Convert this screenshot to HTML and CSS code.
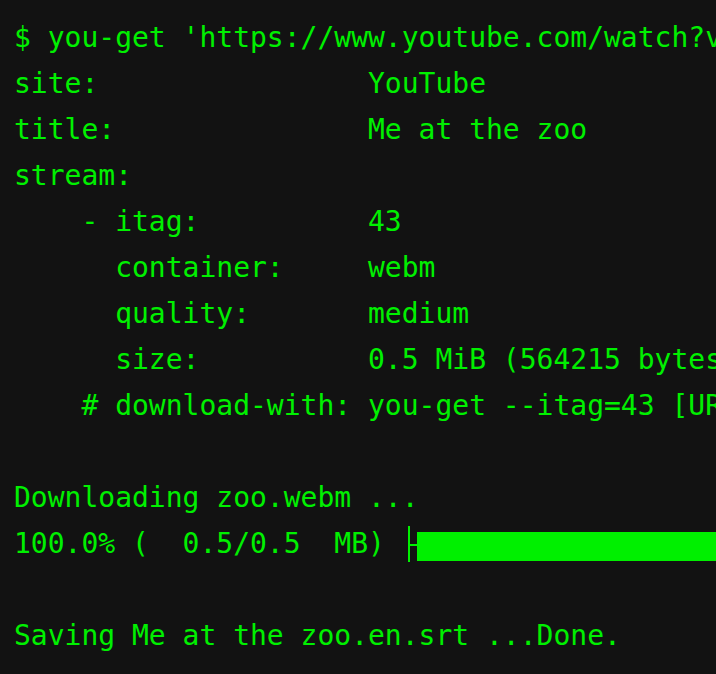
FILE: index.html
```html
<!DOCTYPE html>
<html lang="en">
<head>
    <meta charset="UTF-8">
    <title>you-get</title>
    <link rel="stylesheet" href="styles.css">
</head>
<body>
    <div class="terminal">
        <div class="line">$ you-get 'https://www.youtube.com/watch?v=jNQXAC9IVRw'</div>
        <div class="line">site:                YouTube</div>
        <div class="line">title:               Me at the zoo</div>
        <div class="line">stream:</div>
        <div class="line">    - itag:          43</div>
        <div class="line">      container:     webm</div>
        <div class="line">      quality:       medium</div>
        <div class="line">      size:          0.5 MiB (564215 bytes)</div>
        <div class="line">    # download-with: you-get --itag=43 [URL]</div>
        <div class="line"> </div>
        <div class="line">Downloading zoo.webm ...</div>
        <div class="line">100.0% (  0.5/0.5  MB) <span class="tee"></span><span class="bar"></span></div>
        <div class="line"> </div>
        <div class="line">Saving Me at the zoo.en.srt ...Done.</div>
    </div>
</body>
</html>
```

FILE: styles.css
```css
body {
    margin: 0;
    padding: 0;
    background-color: #121212;
    overflow: hidden;
}

.terminal {
    padding: 15px 0 0 14px;
    color: #00f000;
    font-family: "DejaVu Sans Mono", monospace;
    font-size: 28px;
    line-height: 46px;
    height: 674px;
    box-sizing: border-box;
}

.line {
    white-space: pre;
    overflow: hidden;
    height: 46px;
}

/* progress bar: ├ followed by the filled part */
.tee {
    display: inline-block;
    position: relative;
    width: 15px;
    height: 36px;
    vertical-align: -9px;
}

.tee::before {
    content: "";
    position: absolute;
    left: 6px;
    top: 0;
    width: 2px;
    height: 36px;
    background-color: #00f000;
}

.tee::after {
    content: "";
    position: absolute;
    left: 6px;
    top: 18px;
    width: 9px;
    height: 2px;
    background-color: #00f000;
}

.bar {
    display: inline-block;
    width: 400px;
    height: 29px;
    background-color: #00f000;
    vertical-align: -8px;
}
```
